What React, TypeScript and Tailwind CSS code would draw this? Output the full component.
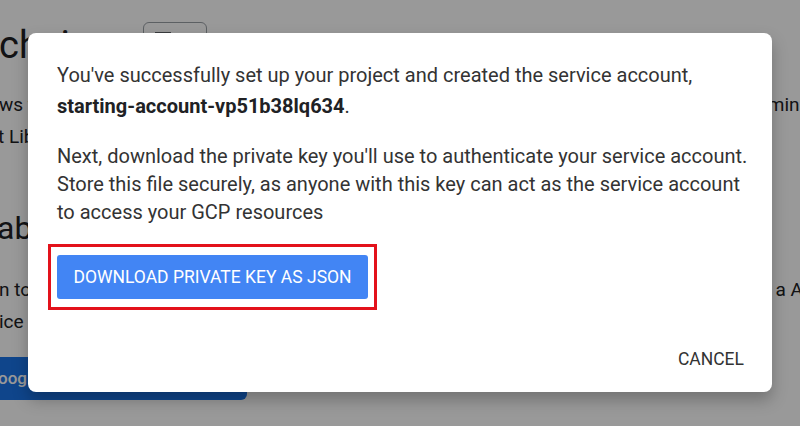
import React from 'react';

const PageBehind: React.FC = () => {
  return (
    <div className="flex flex-col text-[#202124]">
      {/* title row */}
      <div className="mt-[22px] flex h-[40px] items-center">
        <h1 className="w-[133px] -ml-[1px] overflow-hidden whitespace-nowrap text-[38px] leading-[40px] mt-[6px]">chain</h1>
        <div className="ml-[11px] flex h-[40px] w-[64px] items-start justify-start rounded-md border border-[#9aa0a6] pl-[11px] pt-[9px]">
          <div className="h-[3px] w-[16px] bg-[#5f6368]" />
        </div>
      </div>

      {/* intro paragraph */}
      <div className="mt-[27px] text-[19px] leading-[32px]">
        <div className="flex w-[814px] justify-between whitespace-nowrap">
          <span className="-ml-[1px]">ws you to manage</span>
          <span>minis</span>
        </div>
        <div className="whitespace-nowrap -ml-[2px]">t Library</div>
      </div>

      <h2 className="mt-[55px] whitespace-nowrap text-[32px] leading-[40px] -ml-[3px]">able the API</h2>

      <div className="mt-[26px] text-[19px] leading-[32px]">
        <div className="flex w-[820px] justify-between whitespace-nowrap">
          <span className="-ml-[1px]">n to enable</span>
          <span>a API</span>
        </div>
        <div className="whitespace-nowrap -ml-[1px]">ice account</div>
      </div>

      <div className="mt-[19px] flex h-[43px] w-[247px] items-center rounded-r-md bg-[#1a73e8] text-[17px] font-medium text-white">
        <span className="-ml-[2px] whitespace-nowrap">oogle Cloud</span>
      </div>
    </div>
  );
};

const App: React.FC = () => {
  return (
    <div className="relative h-[426px] w-[800px] overflow-hidden bg-white font-['Roboto',sans-serif]">
      <PageBehind />

      {/* modal overlay */}
      <div className="absolute inset-0 flex justify-center bg-black/40">
        <div className="mt-[33px] flex h-[359px] w-[744px] flex-col rounded-lg bg-white shadow-[0_8px_16px_rgba(0,0,0,0.25)]">
          <div className="flex-1 pl-[29px] pr-[24px] pt-[27px] text-[20px] text-[#333333]">
            <p className="leading-[31px]">
              You've successfully set up your project and created the service account,{' '}
              <strong className="whitespace-nowrap font-bold text-[#202124]">starting-account-vp51b38lq634</strong>.
            </p>
            <p className="mt-[20px] leading-[28px]">
              Next, download the private key you'll use to authenticate your service account.
              Store this file securely, as anyone with this key can act as the service account
              to access your GCP resources
            </p>

            <div className="-ml-[9px] mt-[18px] inline-block border-[3px] border-[#e3121b] px-[6px] py-[8px]">
              <button className="h-[44px] w-[311px] rounded-[3px] bg-[#4285f4] text-[17.5px] font-normal text-white">
                DOWNLOAD PRIVATE KEY AS JSON
              </button>
            </div>
          </div>

          <div className="flex justify-end pb-[15px] pr-[20px]">
            <button className="h-[36px] px-[8px] text-[17.5px] text-[#333333]">CANCEL</button>
          </div>
        </div>
      </div>
    </div>
  );
};

export default App;
